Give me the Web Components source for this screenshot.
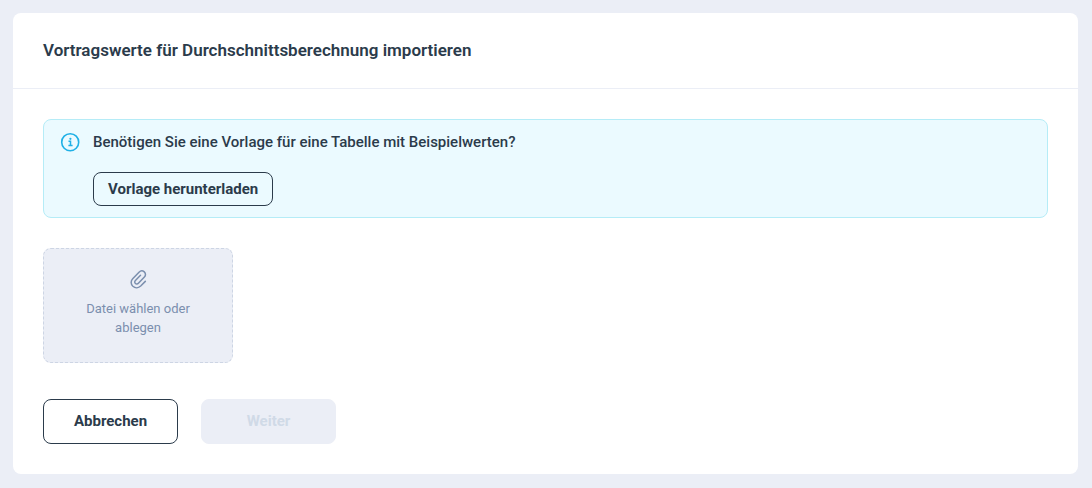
<!DOCTYPE html>
<html lang="de">
<head>
<meta charset="utf-8">
<meta name="viewport" content="width=device-width, initial-scale=1">
<title>Vortragswerte importieren</title>
<style>
  html {
    --page: #ebeef6;
    --ink: #2b3b4b;
    --muted: #7b8fae;
    --radius: 8px;
    background: var(--page);
  }
  body {
    margin: 0;
    padding: 13px 14px 14px 13px;
    font: 500 15px/20px Roboto, "Liberation Sans", sans-serif;
    color: var(--ink);
  }
</style>
</head>
<body>
<import-card>
  <span slot="title">Vortragswerte für Durchschnittsberechnung importieren</span>
  <info-banner>
    Benötigen Sie eine Vorlage für eine Tabelle mit Beispielwerten?
    <app-button slot="action" size="small">Vorlage herunterladen</app-button>
  </info-banner>
  <file-drop>Datei wählen oder ablegen</file-drop>
  <app-button slot="actions">Abbrechen</app-button>
  <app-button slot="actions" disabled>Weiter</app-button>
</import-card>

<template id="import-card">
  <style>
    :host { display: block; background: #fff; border-radius: var(--radius); }
    header { padding: 25px 30px; border-bottom: 1px solid var(--page); }
    h1 { margin: 0; font-size: 17px; line-height: 25px; font-weight: 600; }
    main { display: flex; flex-direction: column; align-items: stretch; gap: 30px; padding: 30px; }
    footer { display: flex; flex-wrap: wrap; gap: 23px; padding-top: 6px; }
  </style>
  <header><h1><slot name="title"></slot></h1></header>
  <main>
    <slot></slot>
    <footer><slot name="actions"></slot></footer>
  </main>
</template>

<template id="info-banner">
  <style>
    :host {
      display: grid; grid-template-columns: 20px 1fr; column-gap: 13px; row-gap: 20px;
      padding: 12px 16px 11px; background: #ebfaff; border: 1px solid #b5ecf7; border-radius: var(--radius);
    }
    svg { display: block; }
    .action { grid-column: 2; display: flex; }
  </style>
  <svg width="20" height="20" viewBox="0 0 20 20" fill="none" stroke="#1fb0e6" aria-hidden="true">
    <circle cx="10.2" cy="10.2" r="8.5" stroke-width="1.6"/>
    <path d="M8.5 9.3H10.5V13.4M8.4 13.5H12.6" stroke-width="1.5"/>
    <circle cx="10.4" cy="6.8" r="1.1" fill="#1fb0e6" stroke="none"/>
  </svg>
  <div><slot></slot></div>
  <div class="action"><slot name="action"></slot></div>
</template>

<template id="file-drop">
  <style>
    :host { display: block; max-width: 190px; }
    label {
      position: relative; box-sizing: border-box; display: flex; flex-direction: column; align-items: center;
      gap: 10px; min-height: 115px; padding: 20px 35px; cursor: pointer;
      background: var(--page); border: 1px dashed #cdd5e4; border-radius: var(--radius);
      color: var(--muted); font-size: 13px; line-height: 19px; font-weight: 400; text-align: center;
    }
    input { position: absolute; inset: 0; width: 100%; height: 100%; opacity: 0; cursor: pointer; }
    svg { display: block; }
  </style>
  <label>
    <svg width="20" height="20" viewBox="0 0 20 20" fill="none" stroke="currentColor" stroke-width="1.5" stroke-linecap="round" stroke-linejoin="round" aria-hidden="true">
      <path d="M17.3 12.4L12.7 17C10.5 19.1 7.2 19.3 4.9 17.3C2.6 15.2 2.6 12 4.7 9.8L11 3.2C12.5 1.7 14.8 1.6 16.3 2.9C17.8 4.3 17.9 6.5 16.4 8.1L10.4 14.3C9.5 15.2 8.2 15.3 7.4 14.5C6.5 13.7 6.5 12.4 7.4 11.5L12.5 6.2"/>
    </svg>
    <span><slot></slot></span>
    <input type="file">
  </label>
</template>

<template id="app-button">
  <style>
    :host { display: block; }
    button {
      box-sizing: border-box; min-width: 135px; height: 45px; padding: 0 14px 2px;
      font: inherit; font-weight: 700; color: var(--ink); background: transparent;
      border: 1px solid var(--ink); border-radius: var(--radius); cursor: pointer;
    }
    :host([size="small"]) button { height: 34px; padding: 0 14px; }
    button:disabled { background: var(--page); border-color: var(--page); color: #d0dae7; cursor: default; }
  </style>
  <button type="button"><slot></slot></button>
</template>

<script>
  class TemplateElement extends HTMLElement {
    constructor() {
      super();
      const template = document.getElementById(this.localName);
      this.attachShadow({ mode: "open" }).append(template.content.cloneNode(true));
    }
  }
  class ImportCard extends TemplateElement {}
  class InfoBanner extends TemplateElement {}
  class FileDrop extends TemplateElement {}
  class AppButton extends TemplateElement {
    static observedAttributes = ["disabled"];
    attributeChangedCallback() {
      this.shadowRoot.querySelector("button").disabled = this.hasAttribute("disabled");
    }
  }
  customElements.define("import-card", ImportCard);
  customElements.define("info-banner", InfoBanner);
  customElements.define("file-drop", FileDrop);
  customElements.define("app-button", AppButton);
</script>
</body>
</html>
